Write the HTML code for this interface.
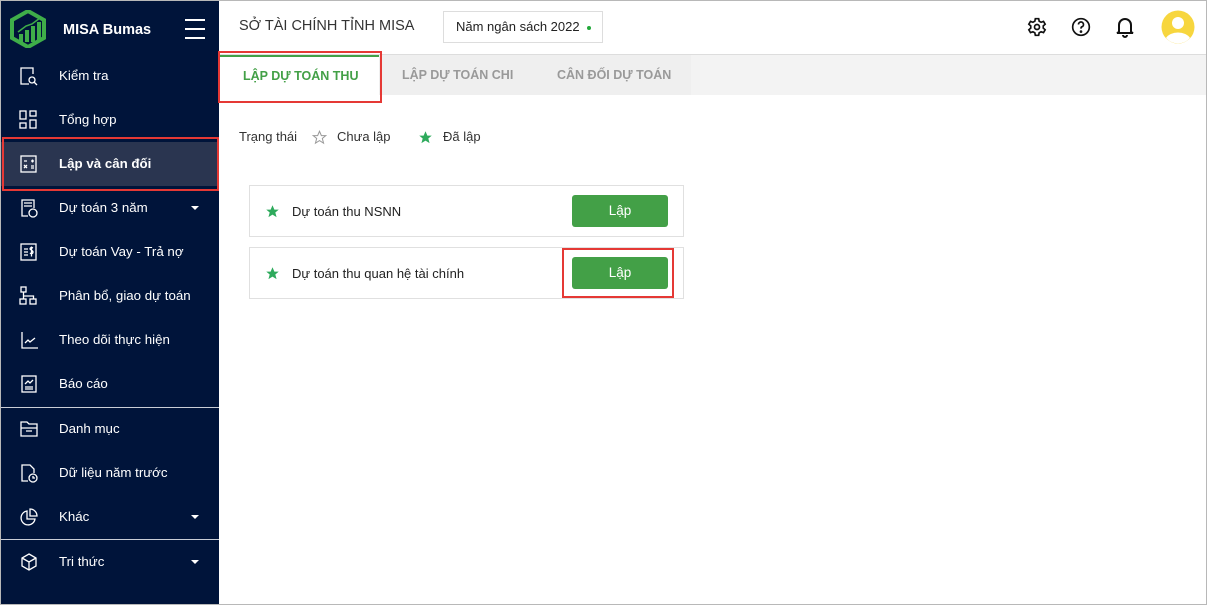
<!DOCTYPE html>
<html><head><meta charset="utf-8"><style>
*{box-sizing:border-box;margin:0;padding:0}
body{width:1207px;height:605px;overflow:hidden;font-family:"Liberation Sans",sans-serif;background:#fff;position:relative}
.frame{position:absolute;inset:0;border:1px solid #b8b8b8;pointer-events:none;z-index:10}
.side{position:absolute;left:0;top:0;width:219px;height:605px;background:#00143a;color:#fff}
.logo{position:absolute;left:10px;top:10px}
.brand{position:absolute;left:63px;top:22px;font-weight:bold;font-size:14.5px}
.ham{position:absolute;left:185px;top:19px;width:20px}
.ham i{display:block;height:2px;background:#fff;margin-bottom:7px}
.item{position:absolute;left:0;width:219px;height:44px;font-size:13.3px}
.item span{position:absolute;left:59px;top:14px}
.item svg{position:absolute;left:19px;top:12px}
.item .car{position:absolute;left:191px;top:20px;border-left:4px solid transparent;border-right:4px solid transparent;border-top:4px solid #fff}
.sep{position:absolute;left:0;width:219px;height:1px;background:#c9cdd6}
.hdr{position:absolute;left:219px;top:0;right:0;height:55px;border-bottom:1px solid #ddd}
.tabs{position:absolute;left:219px;top:55px;right:0;height:40px;background:#f3f3f3}
.tab{position:absolute;top:13px;font-size:12.5px;font-weight:bold;color:#999}
.card{position:absolute;left:249px;width:435px;height:52px;border:1px solid #e0e0e0;font-size:13px;color:#222}
.btn{position:absolute;left:322px;top:9px;width:96px;height:32px;background:#43a047;border-radius:3px;color:#fff;text-align:center;line-height:32px;font-size:13.5px}
.red{position:absolute;border:2px solid #e53935}
</style></head><body>
<div class="side">
<svg class="logo" width="36" height="38" viewBox="0 0 36 38"><path d="M18 1 L34 10 L34 28 L18 37 L2 28 L2 10 Z" fill="none" stroke="#3fae49" stroke-width="4"/><rect x="9" y="24" width="4" height="8" fill="#3fae49"/><rect x="15" y="20" width="4" height="12" fill="#3fae49"/><rect x="21" y="16" width="4" height="16" fill="#3fae49"/><rect x="27" y="12" width="4" height="18" fill="#3fae49"/><path d="M8 22 L16 16 L22 14 L30 8" stroke="#3fae49" stroke-width="1.5" fill="none"/></svg>
<div class="brand">MISA Bumas</div>
<div class="ham"><i></i><i></i><i></i></div>

<div class="item" style="top:54px"><svg width="20" height="20" viewBox="0 0 20 20" fill="none" stroke="#fff" stroke-width="1.3"><path d="M14 8V2H2v16h8"/><circle cx="13" cy="14" r="3"/><path d="M15 16l3 3"/></svg><span>Kiểm tra</span></div>
<div class="item" style="top:98px"><svg width="20" height="20" viewBox="0 0 20 20" fill="none" stroke="#fff" stroke-width="1.3"><rect x="1" y="1" width="6" height="8"/><rect x="1" y="13" width="6" height="5"/><rect x="11" y="1" width="6" height="5"/><rect x="11" y="10" width="6" height="8"/></svg><span>Tổng hợp</span></div>
<div class="item" style="top:142px;background:#2a3550;font-weight:bold"><svg width="20" height="20" viewBox="0 0 20 20" fill="none" stroke="#fff" stroke-width="1.3"><rect x="2" y="2" width="15" height="16"/><path d="M5 7h3M12 7h3M13.5 5.5v3M5 11l3 3M8 11l-3 3M12 12h3M12 14h3"/></svg><span>Lập và cân đối</span></div>
<div class="item" style="top:186px"><svg width="20" height="20" viewBox="0 0 20 20" fill="none" stroke="#fff" stroke-width="1.3"><path d="M9 18H3V2h12v8"/><path d="M5 5h8M5 8h8"/><circle cx="14" cy="15" r="4"/></svg><span>Dự toán 3 năm</span><i class="car"></i></div>
<div class="item" style="top:230px"><svg width="20" height="20" viewBox="0 0 20 20" fill="none" stroke="#fff" stroke-width="1.3"><rect x="2" y="2" width="15" height="16"/><path d="M5 7h4M5 10h4M5 13h4M14 6c-2-1-3 0-3 1s3 1 3 3-2 2-3 1M12.5 4.5v10"/></svg><span>Dự toán Vay - Trả nợ</span></div>
<div class="item" style="top:274px"><svg width="20" height="20" viewBox="0 0 20 20" fill="none" stroke="#fff" stroke-width="1.3"><rect x="2" y="1" width="5" height="5"/><rect x="1" y="13" width="6" height="5"/><rect x="11" y="13" width="6" height="5"/><path d="M4.5 6v4h10v3M4.5 10v3"/></svg><span>Phân bổ, giao dự toán</span></div>
<div class="item" style="top:318px"><svg width="20" height="20" viewBox="0 0 20 20" fill="none" stroke="#fff" stroke-width="1.3"><path d="M3 2v16h16M6 13l3-3 2 2 5-4"/></svg><span>Theo dõi thực hiện</span></div>
<div class="item" style="top:362px"><svg width="20" height="20" viewBox="0 0 20 20" fill="none" stroke="#fff" stroke-width="1.3"><rect x="3" y="2" width="14" height="16"/><path d="M6 10l3-3 2 2 3-3M6 13h8M6 15h8"/></svg><span>Báo cáo</span></div>
<div class="sep" style="top:407px"></div>
<div class="item" style="top:407px"><svg width="20" height="20" viewBox="0 0 20 20" fill="none" stroke="#fff" stroke-width="1.3"><path d="M2 17V3h6l2 2h8v12z"/><path d="M2 9h16M7 12h6"/></svg><span>Danh mục</span></div>
<div class="item" style="top:451px"><svg width="20" height="20" viewBox="0 0 20 20" fill="none" stroke="#fff" stroke-width="1.3"><path d="M9 18H3V2h8l4 4v4"/><circle cx="14" cy="15" r="4"/><path d="M14 13v2h2"/></svg><span>Dữ liệu năm trước</span></div>
<div class="item" style="top:495px"><svg width="20" height="20" viewBox="0 0 20 20" fill="none" stroke="#fff" stroke-width="1.3"><path d="M8 4a7 7 0 1 0 8 8H8z"/><path d="M11 2a7 7 0 0 1 7 7h-7z"/></svg><span>Khác</span><i class="car"></i></div>
<div class="sep" style="top:539px"></div>
<div class="item" style="top:540px"><svg width="20" height="20" viewBox="0 0 20 20" fill="none" stroke="#fff" stroke-width="1.3"><path d="M10 2l7 4v8l-7 4-7-4V6z"/><path d="M3 6l7 4 7-4M10 10v8"/></svg><span>Tri thức</span><i class="car"></i></div>
</div>
<div class="red" style="left:2px;top:137px;width:217px;height:54px"></div>

<div class="hdr">
<div style="position:absolute;left:20px;top:18px;font-size:14.5px;color:#333">SỞ TÀI CHÍNH TỈNH MISA</div>
<div style="position:absolute;left:224px;top:11px;width:160px;height:32px;border:1px solid #ddd;font-size:13px;color:#222;line-height:30px;padding-left:12px">Năm ngân sách 2022 <span style="display:inline-block;width:4px;height:4px;border-radius:50%;background:#22a83a;vertical-align:middle;margin-left:4px"></span></div>
<svg style="position:absolute;left:808px;top:17px" width="20" height="20" viewBox="0 0 24 24" fill="none" stroke="#111" stroke-width="2"><circle cx="12" cy="12" r="3"/><path d="M10 2h4l.6 3 2.3 1.3 2.9-1 2 3.4-2.3 2v2.6l2.3 2-2 3.4-2.9-1-2.3 1.3-.6 3h-4l-.6-3-2.3-1.3-2.9 1-2-3.4 2.3-2v-2.6l-2.3-2 2-3.4 2.9 1L9.4 5z"/></svg>
<svg style="position:absolute;left:852px;top:17px" width="20" height="20" viewBox="0 0 24 24" fill="none" stroke="#111" stroke-width="2"><circle cx="12" cy="12" r="10"/><path d="M9 9a3 3 0 1 1 4 2.8c-1 .4-1 1.2-1 2.2"/><circle cx="12" cy="17.5" r=".6" fill="#111"/></svg>
<svg style="position:absolute;left:897px;top:16px" width="18" height="22" viewBox="0 0 18 22" fill="none" stroke="#111" stroke-width="2"><path d="M3 16V9a6 6 0 0 1 12 0v7l2 1H1z"/><path d="M7 19a2 2 0 0 0 4 0"/></svg>
<svg style="position:absolute;left:942px;top:10px" width="34" height="34" viewBox="0 0 34 34"><circle cx="17" cy="17" r="16.5" fill="#f7d63e"/><circle cx="17" cy="13" r="6" fill="#fff"/><path d="M5 28a13 9 0 0 1 24 0a16 16 0 0 1-24 0z" fill="#fff"/></svg>
</div>

<div class="tabs">
<div style="position:absolute;left:0;top:0;width:472px;height:40px;background:#efefef"></div>
<div style="position:absolute;left:0;top:0;width:160px;height:40px;background:#fff;border-top:2px solid #43a047"></div>
<div class="tab" style="left:24px;top:14px;color:#43a047">LẬP DỰ TOÁN THU</div>
<div class="tab" style="left:183px">LẬP DỰ TOÁN CHI</div>
<div class="tab" style="left:338px">CÂN ĐỐI DỰ TOÁN</div>
</div>
<div class="red" style="left:218px;top:51px;width:164px;height:52px"></div>

<div style="position:absolute;left:239px;top:129px;font-size:13px;color:#333">Trạng thái</div>
<svg style="position:absolute;left:312px;top:130px" width="15" height="15" viewBox="0 0 24 24"><path d="M12 2l3 7h7l-5.5 4.5 2 7.5L12 17l-6.5 4 2-7.5L2 9h7z" fill="none" stroke="#999" stroke-width="1.6"/></svg>
<div style="position:absolute;left:337px;top:129px;font-size:13px;color:#333">Chưa lập</div>
<svg style="position:absolute;left:418px;top:130px" width="15" height="15" viewBox="0 0 24 24"><path d="M12 2l3 7h7l-5.5 4.5 2 7.5L12 17l-6.5 4 2-7.5L2 9h7z" fill="#2eaa5c"/></svg>
<div style="position:absolute;left:443px;top:129px;font-size:13px;color:#333">Đã lập</div>

<div class="card" style="top:185px"><svg style="position:absolute;left:15px;top:18px" width="15" height="15" viewBox="0 0 24 24"><path d="M12 2l3 7h7l-5.5 4.5 2 7.5L12 17l-6.5 4 2-7.5L2 9h7z" fill="#2eaa5c"/></svg><span style="position:absolute;left:42px;top:18px">Dự toán thu NSNN</span><div class="btn">Lập</div></div>
<div class="card" style="top:247px"><svg style="position:absolute;left:15px;top:18px" width="15" height="15" viewBox="0 0 24 24"><path d="M12 2l3 7h7l-5.5 4.5 2 7.5L12 17l-6.5 4 2-7.5L2 9h7z" fill="#2eaa5c"/></svg><span style="position:absolute;left:42px;top:18px">Dự toán thu quan hệ tài chính</span><div class="btn">Lập</div></div>
<div class="red" style="left:562px;top:248px;width:112px;height:50px"></div>
<div class="frame"></div>
</body></html>
